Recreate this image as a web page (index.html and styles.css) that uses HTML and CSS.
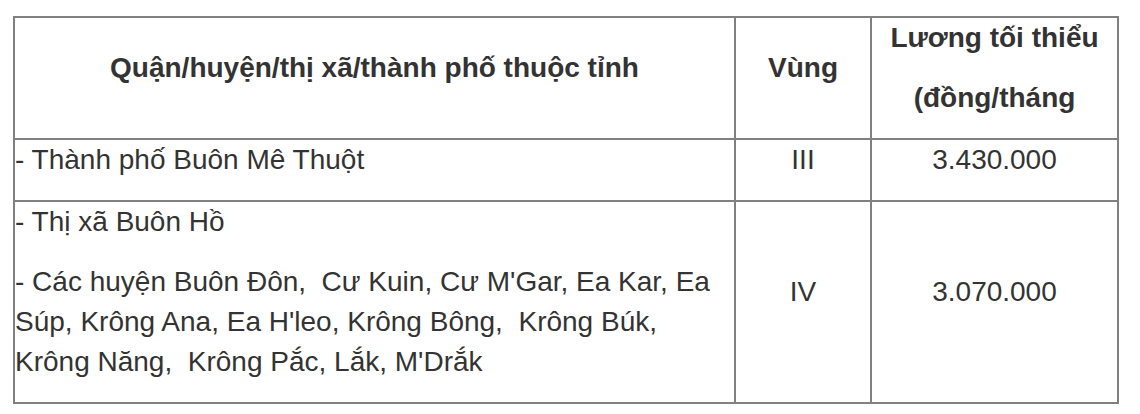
FILE: index.html
```html
<!DOCTYPE html>
<html lang="vi">
<head>
<meta charset="utf-8">
<title>Lương tối thiểu vùng</title>
<link rel="stylesheet" href="styles.css">
</head>
<body>
<table class="wage-table">
  <colgroup>
    <col class="col-area">
    <col class="col-zone">
    <col class="col-wage">
  </colgroup>
  <thead>
    <tr class="row-head">
      <th class="cell center"><p>Quận/huyện/thị xã/thành phố thuộc tỉnh</p></th>
      <th class="cell center"><p>Vùng</p></th>
      <th class="cell center"><p>Lương tối thiểu</p><p>(đồng/tháng</p></th>
    </tr>
  </thead>
  <tbody>
    <tr class="row-one">
      <td class="cell"><p>- Thành phố Buôn Mê Thuột</p></td>
      <td class="cell center"><p>III</p></td>
      <td class="cell center"><p>3.430.000</p></td>
    </tr>
    <tr class="row-two">
      <td class="cell"><p>- Thị xã Buôn Hồ</p><p>- Các huyện Buôn Đôn,&nbsp; Cư Kuin, Cư M'Gar, Ea Kar, Ea Súp, Krông Ana, Ea H'leo, Krông Bông,&nbsp; Krông Búk, Krông Năng,&nbsp; Krông Pắc, Lắk, M'Drắk</p></td>
      <td class="cell center"><p>IV</p></td>
      <td class="cell center"><p>3.070.000</p></td>
    </tr>
  </tbody>
</table>
</body>
</html>
```

FILE: styles.css
```css
html, body {
  margin: 0;
  padding: 0;
  background: #ffffff;
}

body {
  padding: 16px 0 0 13px;
  font-family: "Liberation Sans", Arial, Helvetica, sans-serif;
  font-size: 28px;
  line-height: 40px;
  color: #333333;
}

.wage-table {
  table-layout: fixed;
  border-collapse: separate;
  border-spacing: 0;
  width: 1106px;
  border-top: 2px solid #808080;
  border-left: 2px solid #808080;
}

.col-area { width: 721px; }
.col-zone { width: 136px; }
.col-wage { width: 247px; }

.cell {
  padding: 0;
  border-right: 2px solid #808080;
  border-bottom: 2px solid #808080;
  vertical-align: middle;
  text-align: left;
  font-weight: normal;
}

th.cell {
  font-weight: bold;
}

.center {
  text-align: center;
}

.cell p {
  margin: 0 0 20px 0;
}

.row-head { height: 122px; }
.row-one { height: 62px; }
.row-two { height: 202px; }
```
